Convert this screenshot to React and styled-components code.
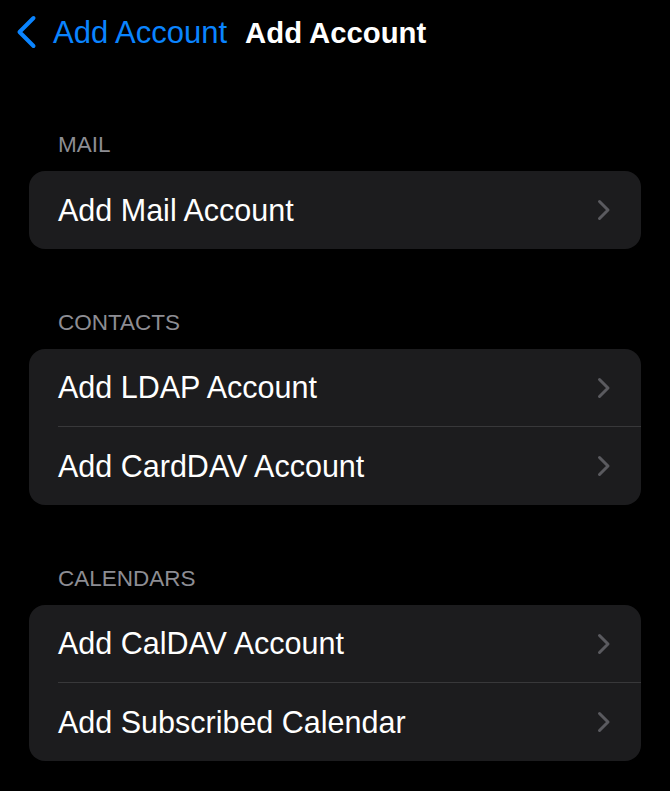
import React from 'react';
import styled, { createGlobalStyle } from 'styled-components';

const GlobalStyle = createGlobalStyle`
  html, body {
    margin: 0;
    padding: 0;
    background: #000;
  }
  body {
    font-family: 'Liberation Sans', Arial, sans-serif;
    color: #fff;
    -webkit-font-smoothing: antialiased;
  }
`;

const sections = [
  { title: 'MAIL', items: ['Add Mail Account'] },
  { title: 'CONTACTS', items: ['Add LDAP Account', 'Add CardDAV Account'] },
  { title: 'CALENDARS', items: ['Add CalDAV Account', 'Add Subscribed Calendar'] },
];

const BackChevron = () => (
  <svg width='22' height='34' viewBox='0 0 22 34' fill='none'>
    <path
      d='M18.5 3 L4.5 17 L18.5 31'
      stroke='#0a84ff'
      strokeWidth='4'
      strokeLinecap='round'
      strokeLinejoin='round'
    />
  </svg>
);

const RowChevron = () => (
  <svg width='14' height='22' viewBox='0 0 14 22' fill='none'>
    <path
      d='M2.5 2.5 L11 11 L2.5 19.5'
      stroke='#5a5a5f'
      strokeWidth='3'
      strokeLinecap='round'
      strokeLinejoin='round'
    />
  </svg>
);

const App = () => {
  return (
    <>
      <GlobalStyle />
      <Page>
        <NavBar>
          <BackButton>
            <BackChevron />
            <span>Add Account</span>
          </BackButton>
          <Title>Add Account</Title>
        </NavBar>
        <List>
          {sections.map((section) => (
            <Section key={section.title}>
              <SectionLabel>{section.title}</SectionLabel>
              <Card>
                {section.items.map((item, i) => (
                  <Row key={item} $last={i === section.items.length - 1}>
                    <RowText>{item}</RowText>
                    <RowChevron />
                  </Row>
                ))}
              </Card>
            </Section>
          ))}
        </List>
      </Page>
    </>
  );
};

const Page = styled.div`
  width: 670px;
  min-height: 791px;
  background: #000;
  overflow: hidden;
`;

const NavBar = styled.header`
  height: 66px;
  display: flex;
  align-items: center;
  padding-left: 15px;
  gap: 18px;
`;

const BackButton = styled.button`
  display: flex;
  align-items: center;
  gap: 16px;
  background: transparent;
  border: none;
  padding: 0;
  color: #0a84ff;
  font-family: inherit;
  font-size: 31px;
  cursor: pointer;
  svg {
    margin-top: -2px;
  }
`;

const Title = styled.h1`
  margin: 0;
  font-size: 29.3px;
  font-weight: 700;
  color: #fff;
`;

const List = styled.main`
  display: flex;
  flex-direction: column;
  gap: 62px;
  padding: 67px 29px 0;
`;

const Section = styled.section`
  display: flex;
  flex-direction: column;
  gap: 14px;
`;

const SectionLabel = styled.div`
  padding-left: 29px;
  font-size: 22.5px;
  line-height: 24px;
  color: #8d8d93;
`;

const Card = styled.div`
  background: #1c1c1e;
  border-radius: 16px;
  overflow: hidden;
`;

const Row = styled.div`
  height: 78px;
  margin-left: 29px;
  padding-right: 30px;
  display: flex;
  align-items: center;
  justify-content: space-between;
  box-sizing: border-box;
  border-bottom: ${({ $last }) => ($last ? 'none' : '1px solid #38383a')};
`;

const RowText = styled.span`
  font-size: 30.5px;
  color: #fff;
`;

export default App;
